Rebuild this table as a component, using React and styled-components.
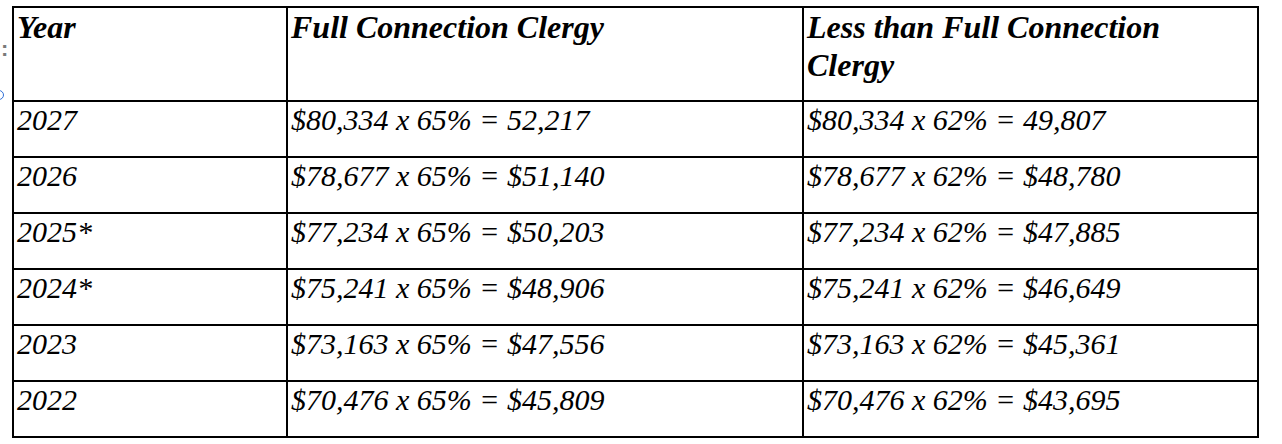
import React from "react";
import styled, { createGlobalStyle } from "styled-components";

const GlobalStyle = createGlobalStyle`
  body {
    margin: 0;
    background: #ffffff;
    font-family: "Liberation Serif", "Times New Roman", serif;
  }
`;

const Page = styled.div`
  position: relative;
  padding: 6px 0 0 12px;
  width: 1282px;
  height: 444px;
  box-sizing: border-box;
`;

const Gutter = styled.span`
  position: absolute;
  left: 1px;
  top: 36px;
  color: #7a7a7a;
  font-family: "Liberation Sans", Arial, sans-serif;
  font-size: 22px;
  font-weight: bold;
`;

const Handle = styled.span`
  position: absolute;
  left: -6px;
  top: 90px;
  width: 8px;
  height: 8px;
  border: 1.5px solid #2f6fd6;
  border-radius: 50%;
`;

const Table = styled.table`
  border-collapse: collapse;
  table-layout: fixed;
  width: 1246px;
  border: 2px solid #000;
`;

const Head = styled.th`
  width: ${({ $w }) => $w}px;
  height: 92px;
  border: 2px solid #000;
  padding: 0 3px;
  vertical-align: top;
  text-align: left;
  font-weight: bold;
  font-style: italic;
  font-size: 32px;
  line-height: 38px;
  color: #000;
`;

const Cell = styled.td`
  height: 54px;
  border: 2px solid #000;
  padding: 0 3px;
  vertical-align: top;
  font-style: italic;
  font-size: 30px;
  line-height: 36px;
  color: #000;
`;

const rows = [
  ["2027", "$80,334 x 65% = 52,217", "$80,334 x 62% = 49,807"],
  ["2026", "$78,677 x 65% = $51,140", "$78,677 x 62% = $48,780"],
  ["2025*", "$77,234 x 65% = $50,203", "$77,234 x 62% = $47,885"],
  ["2024*", "$75,241 x 65% = $48,906", "$75,241 x 62% = $46,649"],
  ["2023", "$73,163 x 65% = $47,556", "$73,163 x 62% = $45,361"],
  ["2022", "$70,476 x 65% = $45,809", "$70,476 x 62% = $43,695"],
];

export default function App() {
  return (
    <>
      <GlobalStyle />
      <Page>
        <Gutter>:</Gutter>
        <Handle />
        <Table>
          <thead>
            <tr>
              <Head $w={266}>Year</Head>
              <Head $w={508}>Full Connection Clergy</Head>
              <Head $w={447}>
                Less than Full Connection
                <br />
                Clergy
              </Head>
            </tr>
          </thead>
          <tbody>
            {rows.map((r) => (
              <tr key={r[0]}>
                {r.map((c, i) => (
                  <Cell key={i}>{c}</Cell>
                ))}
              </tr>
            ))}
          </tbody>
        </Table>
      </Page>
    </>
  );
}
